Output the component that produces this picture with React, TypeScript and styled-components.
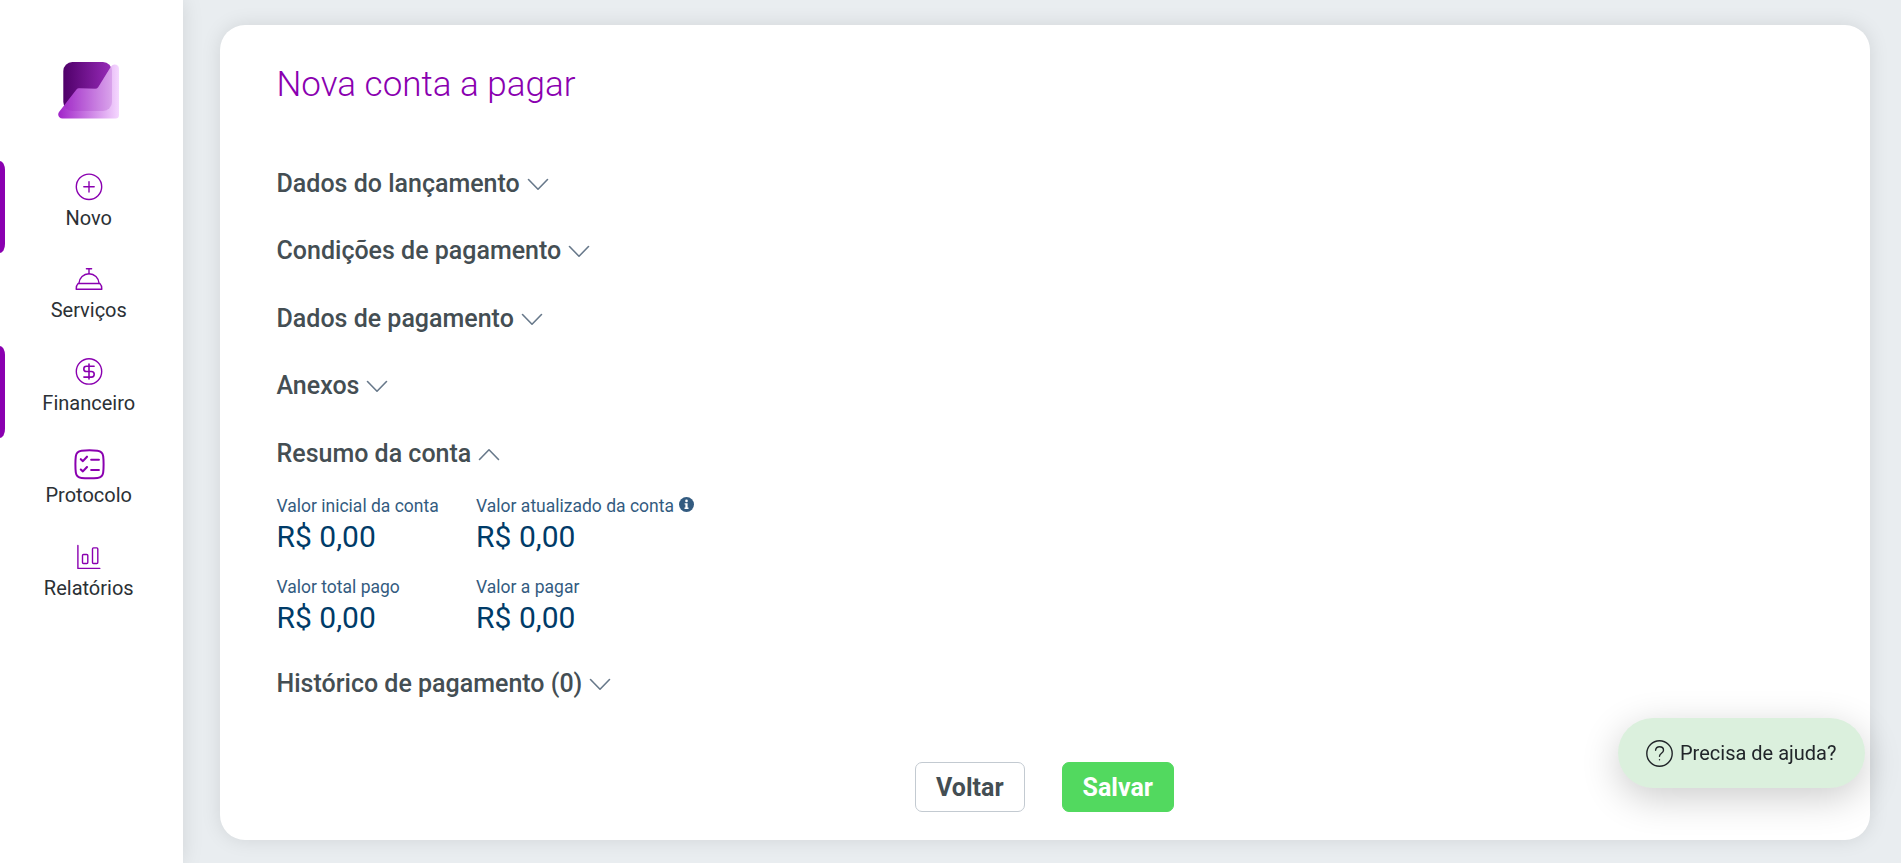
import { ReactNode, useState } from "react";
import styled, { createGlobalStyle } from "styled-components";

const GlobalStyle = createGlobalStyle`
  * {
    box-sizing: border-box;
  }

  body {
    margin: 0;
    overflow: hidden;
    background-color: #e9edf0;
    font-family: Roboto, "Liberation Sans", sans-serif;
  }
`;

const Page = styled.div`
  display: flex;
  height: 100vh;
`;

const Sidebar = styled.aside`
  flex: 0 0 183px;
  padding-top: 62px;
  background-color: #ffffff;
  box-shadow: 0 0 20px rgba(0, 0, 0, 0.1);
`;

const LogoLink = styled.a`
  display: block;
  height: 98.5px;
  padding-left: 58px;
`;

const NavItem = styled.a<{ $active?: boolean }>`
  position: relative;
  display: flex;
  flex-direction: column;
  align-items: center;
  height: 92.5px;
  padding: 11px 5.5px 0 0;
  color: #2b3035;
  font-size: 20px;
  line-height: 30px;
  cursor: pointer;

  &::before {
    content: "";
    display: ${(props) => (props.$active ? "block" : "none")};
    position: absolute;
    top: 0;
    left: 0;
    width: 5px;
    height: 92px;
    border-radius: 0 5px 5px 0 / 0 9px 9px 0;
    background-color: #8a00b0;
  }
`;

const NavIcon = styled.svg`
  flex: none;
  width: 30px;
  height: 30px;
  margin: 0 0.5px 1px 0;
  overflow: visible;
  fill: none;
  stroke: #8a00b0;
  stroke-width: 1.4;
  stroke-linecap: round;
  stroke-linejoin: round;
`;

const Main = styled.main`
  flex: 1;
  display: flex;
  padding: 25px 31px 23px 37px;
`;

const Card = styled.section`
  flex: 1;
  display: flex;
  flex-direction: column;
  padding: 38px 57.5px 28px 56.5px;
  border-radius: 25px;
  background-color: #ffffff;
  box-shadow: 0 0 20px rgba(0, 0, 0, 0.1);
`;

const Title = styled.h1`
  margin: 0 0 58.9px;
  color: #8a00b0;
  font-size: 35px;
  font-weight: 300;
  line-height: 43px;
`;

const Section = styled.div`
  margin-bottom: 30px;
`;

const SectionHeader = styled.div`
  display: flex;
  align-items: center;
  gap: 7px;
  height: 37.5px;
  color: #444e53;
  font-size: 25px;
  font-weight: 500;
  line-height: 37.5px;
  cursor: pointer;
`;

const Chevron = styled.svg<{ $open: boolean }>`
  width: 22px;
  height: 13px;
  margin-top: 1px;
  fill: none;
  stroke: #67788a;
  stroke-width: 1.6;
  stroke-linecap: round;
  stroke-linejoin: round;
  transform: ${(props) => (props.$open ? "rotate(180deg)" : "none")};
`;

const Summary = styled.div`
  display: grid;
  grid-template-columns: 199.6px max-content;
  row-gap: 18.75px;
  margin-bottom: -1.5px;
  padding-top: 20.2px;
`;

const SummaryLabel = styled.div`
  display: flex;
  align-items: center;
  gap: 5px;
  height: 26px;
  color: #335b80;
  font-size: 17.5px;
  line-height: 26px;
`;

const SummaryValue = styled.div`
  color: #003b68;
  font-size: 30px;
  line-height: 36.5px;
`;

const InfoIcon = styled.svg`
  width: 15px;
  height: 15px;
  margin-top: -2px;
`;

const Actions = styled.div`
  display: flex;
  justify-content: center;
  gap: 37px;
  margin-top: auto;
`;

const Button = styled.button<{ $primary?: boolean }>`
  height: 50px;
  padding: 0 20px;
  border: 1px solid ${(props) => (props.$primary ? "#52d95f" : "#c3cad1")};
  border-radius: 7px;
  background-color: ${(props) => (props.$primary ? "#52d95f" : "#ffffff")};
  color: ${(props) => (props.$primary ? "#ffffff" : "#444e53")};
  font-family: inherit;
  font-size: 25px;
  font-weight: 700;
  cursor: pointer;
`;

const HelpButton = styled.button`
  position: fixed;
  right: 36px;
  bottom: 75px;
  display: flex;
  align-items: center;
  gap: 7px;
  width: 247px;
  height: 70px;
  padding: 0 0 0 28px;
  border: none;
  border-radius: 35px;
  background-color: #dbf0dd;
  box-shadow: 0 10px 38px rgba(0, 0, 0, 0.2);
  color: #212529;
  font-family: inherit;
  font-size: 20px;
  cursor: pointer;
`;

const HelpIcon = styled.svg`
  width: 27px;
  height: 27px;
  fill: none;
  stroke: #212529;
  stroke-width: 1.4;
  stroke-linecap: round;
`;

const navItems: { label: string; active?: boolean; icon: ReactNode }[] = [
  {
    label: "Novo",
    active: true,
    icon: (
      <>
        <circle cx="15" cy="14.8" r="12.7" />
        <path d="M15 9.6v10.4M9.8 14.8h10.4" />
      </>
    ),
  },
  {
    label: "Serviços",
    icon: (
      <>
        <path d="M12.4 4.8h5.2M15 4.8v5" />
        <path d="M4.9 19.5c.3-5.6 4.7-9.7 10.1-9.7s9.8 4.1 10.1 9.7" />
        <path d="M4.1 19.5h21.8q1.9 1.7 1.9 5.8H2.2q0-4.1 1.9-5.8z" />
      </>
    ),
  },
  {
    label: "Financeiro",
    active: true,
    icon: (
      <>
        <circle cx="15" cy="14.4" r="12.7" />
        <path
          strokeWidth="1.6"
          d="M15 7.1v14.9M20.1 9.3h-7.7a2.6 2.6 0 0 0 0 5.2h5a2.8 2.8 0 0 1 0 5.6H9.9"
        />
      </>
    ),
  },
  {
    label: "Protocolo",
    icon: (
      <>
        <path
          strokeWidth="2"
          d="M15.5 1.3Q20.5 1.3 23.5 1.7Q28.6 2.3 29.2 7.3Q29.6 10.5 29.6 15.3T29.2 23.3Q28.6 28.3 23.5 28.9Q20.5 29.3 15.5 29.3T7.5 28.9Q2.4 28.3 1.8 23.3Q1.4 20.1 1.4 15.3T1.8 7.3Q2.4 2.3 7.5 1.7Q10.5 1.3 15.5 1.3z"
        />
        <path
          strokeWidth="2.1"
          d="M6.8 10.2l2.1 1.9 4.1-4.4M6.8 20.5l2.1 1.9 4.1-4.4M17.2 10.7h7.7M17.2 21h7.7"
        />
      </>
    ),
  },
  {
    label: "Relatórios",
    icon: (
      <>
        <path d="M3.9 3.5v22.9h21.9" />
        <rect x="8.5" y="12.5" width="5.3" height="9" rx="1" />
        <rect x="18.5" y="5.9" width="5.3" height="15.6" rx="1" />
      </>
    ),
  },
];

const sections = [
  "Dados do lançamento",
  "Condições de pagamento",
  "Dados de pagamento",
  "Anexos",
  "Resumo da conta",
  "Histórico de pagamento (0)",
];

const summary = [
  { label: "Valor inicial da conta", value: "R$ 0,00" },
  { label: "Valor atualizado da conta", value: "R$ 0,00", info: true },
  { label: "Valor total pago", value: "R$ 0,00" },
  { label: "Valor a pagar", value: "R$ 0,00" },
];

const logoFront =
  "M53 4.5Q54.2 2.5 56.5 2.5 61 2.5 61 7V53Q61 56.5 57.5 56.5H4.5C1 56.5-1 53 1 50L18.5 27.5Q19.5 26.3 21 26.3L37 26.7Q39 26.8 40.2 25.2z";

function Logo() {
  return (
    <svg width="62" height="58" viewBox="0 0 62 58">
      <defs>
        <linearGradient id="logoDark" x1="0" x2="1" y1="0" y2="0">
          <stop offset="0" stopColor="#4f0069" />
          <stop offset="1" stopColor="#982bb9" />
        </linearGradient>
        <linearGradient id="logoLight" x1="0" x2="1" y1="0" y2="0">
          <stop offset="0" stopColor="#a124c9" />
          <stop offset="1" stopColor="#f5d8ff" />
        </linearGradient>
        <clipPath id="logoSquare">
          <rect x="5.3" y="0" width="48.7" height="49" rx="9" />
        </clipPath>
      </defs>
      <rect
        x="5.3"
        y="0"
        width="48.7"
        height="49"
        rx="9"
        fill="url(#logoDark)"
      />
      <path fill="url(#logoLight)" d={logoFront} />
      <path
        clipPath="url(#logoSquare)"
        fill="#8a16b0"
        fillOpacity="0.18"
        d={logoFront}
      />
    </svg>
  );
}

function SummaryContent() {
  return (
    <Summary>
      {summary.map((item) => (
        <div key={item.label}>
          <SummaryLabel>
            {item.label}
            {item.info && (
              <InfoIcon viewBox="0 0 15 15">
                <circle cx="7.5" cy="7.5" r="7.5" fill="#335b80" />
                <circle cx="7.5" cy="3.9" r="1.3" fill="#ffffff" />
                <path
                  d="M5.6 6.2h3v4.3h.9v1.4H5.5v-1.4h.9V7.6h-.8z"
                  fill="#ffffff"
                />
              </InfoIcon>
            )}
          </SummaryLabel>
          <SummaryValue>{item.value}</SummaryValue>
        </div>
      ))}
    </Summary>
  );
}

function App() {
  const [openSection, setOpenSection] = useState("Resumo da conta");

  return (
    <Page>
      <GlobalStyle />
      <Sidebar>
        <LogoLink>
          <Logo />
        </LogoLink>
        {navItems.map((item) => (
          <NavItem key={item.label} $active={item.active}>
            <NavIcon viewBox="0 0 30 30">{item.icon}</NavIcon>
            {item.label}
          </NavItem>
        ))}
      </Sidebar>
      <Main>
        <Card>
          <Title>Nova conta a pagar</Title>
          {sections.map((section) => {
            const open = section === openSection;
            return (
              <Section key={section}>
                <SectionHeader
                  onClick={() => setOpenSection(open ? "" : section)}
                >
                  {section}
                  <Chevron $open={open} viewBox="0 0 22 13">
                    <path d="M1.5 1.5l9.5 9.7 9.5-9.7" />
                  </Chevron>
                </SectionHeader>
                {section === "Resumo da conta" && open && <SummaryContent />}
              </Section>
            );
          })}
          <Actions>
            <Button>Voltar</Button>
            <Button $primary>Salvar</Button>
          </Actions>
        </Card>
      </Main>
      <HelpButton>
        <HelpIcon viewBox="0 0 27 27">
          <circle cx="13.5" cy="13.5" r="12.7" />
          <path d="M9.6 10.2c.3-2.2 1.9-3.4 3.9-3.4 2.3 0 4 1.4 4 3.5 0 3-4 2.9-4 5.9M13.5 19.7v.1" />
        </HelpIcon>
        Precisa de ajuda?
      </HelpButton>
    </Page>
  );
}

export default App;
